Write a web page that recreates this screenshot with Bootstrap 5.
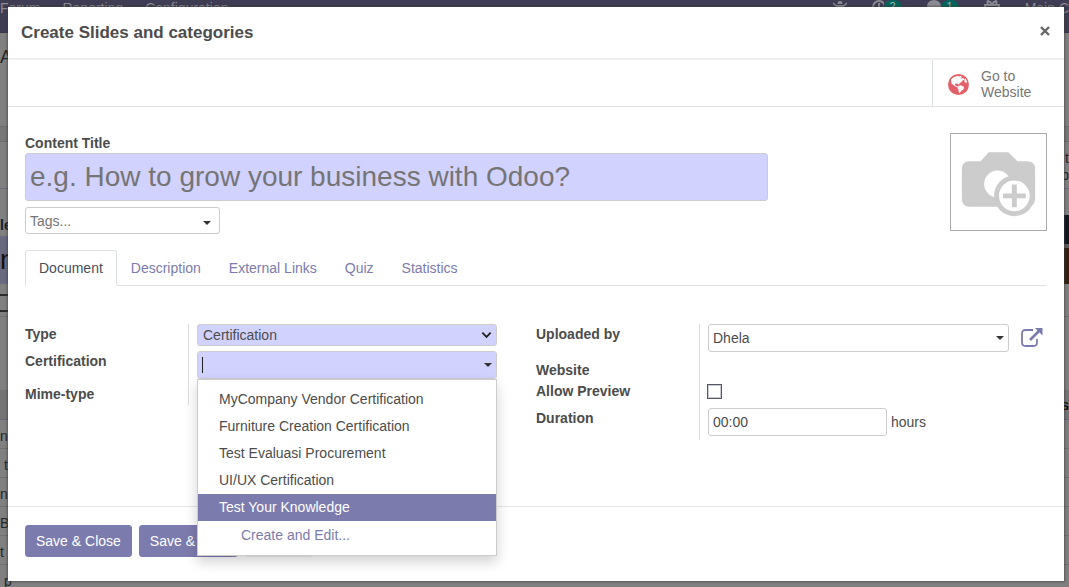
<!DOCTYPE html>
<html lang="en">
<head>
<meta charset="utf-8">
<meta name="viewport" content="width=device-width, initial-scale=1">
<title>Create Slides and categories</title>
<link href="https://cdn.jsdelivr.net/npm/bootstrap@5.3.0/dist/css/bootstrap.min.css" rel="stylesheet">
<style>
  :root { --brand: #7c7bad; --required: #d2d2ff; --ink: #4c4c4c; --rule: #dee2e6; }
  body { font: 14px/21px "Liberation Sans", Arial, sans-serif; color: var(--ink); background: #808080; min-height: 100vh; padding: 7px 5px 6px 8px; position: relative; }

  /* dimmed page behind the dialog */
  .backdrop-page { position: absolute; inset: 0; overflow: hidden; color: #262626; white-space: nowrap; }
  .top-nav { height: 33px; background: #3e3d54; color: #8b8b93; line-height: 16px; border-bottom: 1px solid #38374c; }
  .top-nav .menu-names { gap: 22px; }
  .top-nav .tray { gap: 25px; }
  .tray .pill { background: #00655c; color: #a3b5b3; border-radius: 8px; font-size: 11px; line-height: 12px; width: 18px; text-align: center; }
  .bg-crumb { height: 93px; padding-top: 14px; font-size: 18px; }
  .bg-status { height: 16px; background: #777; border: solid #6c6c6c; border-width: 1px 0; }
  .bg-stats { height: 47px; border-bottom: 1px solid #6d6d78; line-height: 17px; padding-top: 8px; }
  .bg-label { height: 47px; padding-top: 26px; font-weight: bold; color: #1b1b28; }
  .bg-name { height: 48px; background: linear-gradient(90deg, #696980 50%, #808080 50%); font-size: 27px; line-height: 48px; color: #111; }
  .bg-photo { width: 60px; height: 69px; margin-top: -21px; background: linear-gradient(#101820 0 42%, #5c5a58 42% 48%, #33200f 48%); }
  .bg-tags { height: 18px; width: 50%; margin-top: 10px; border: solid #2b2b2b; border-width: 2px 0; }
  .bg-gap { height: 74px; border-top: 1px solid #6f6f6f; margin-top: 4px; }
  .bg-head { height: 30px; background: #747474; border-bottom: 1px solid #686870; font-weight: bold; line-height: 30px; color: #111; }
  .bg-line { height: 29px; line-height: 33px; border-bottom: 1px solid #707070; }

  .dialog { position: relative; background: #fff; box-shadow: 0 0 2px 1px rgba(60,60,60,.6); min-height: calc(100vh - 13px); }
  .dialog-head { height: 53px; padding: 0 14px 0 13px; border-bottom: 2px solid #f0f0f0; }
  .dialog-head h1 { font-size: 17px; font-weight: bold; margin: 0; line-height: 24px; }
  .close-x { border: 0; background: none; padding: 0; line-height: 0; color: #666; margin-bottom: 4px; }
  .button-box { border-bottom: 1px solid var(--rule); height: 47px; }
  .stat-btn { width: 132px; border: 0; border-left: 1px solid var(--rule); background: #fff; color: #777; line-height: 16px; padding: 2px 0 0 15px; gap: 12px; text-align: left; }
  .sheet { padding: 26px 17px 0; }
  .title-block { width: 743px; flex: 0 1 743px; }
  .field-label { font-weight: bold; color: var(--ink); }
  .title-block .field-label { line-height: 20px; }
  .form-control, .form-select { border: 1px solid #ccc; border-radius: 3px; padding: 0 4px; font-size: 14px; line-height: 21px; color: var(--ink); height: 28px; }
  .form-control::placeholder { color: #757575; opacity: 1; }
  .form-control.title-input { height: 48px; font-size: 28px; background: var(--required); }
  .required-field { background-color: var(--required); }
  .form-select.type-select { height: 22px; padding: 0 5px; line-height: 20px; background: var(--required) url("data:image/svg+xml,%3Csvg xmlns='http://www.w3.org/2000/svg' viewBox='0 0 12 8'%3E%3Cpath d='M1.5 1.5 6 6l4.500-4.500' fill='none' stroke='%23222' stroke-width='2'/%3E%3C/svg%3E") no-repeat right 4px center / 11px 8px; }
  .many2one { position: relative; }
  .many2one::after { content: ""; position: absolute; right: 5px; top: 12px; border: 4px solid transparent; border-top-color: #333; border-bottom: 0; }
  .tags-box { width: 195px; margin-top: 6px; }
  .tags-box .form-control { height: 27px; }
  .tags-box::after { top: 14px; right: 9px; }
  .caret-bar { position: absolute; left: 5px; top: 6px; width: 1px; height: 16px; background: #222; }
  .avatar { width: 97px; height: 98px; border: 1px solid #aaa; padding: 0; background: #fff; }

  .nav-tabs { margin-top: 16px; border-color: var(--rule); }
  .nav-tabs .nav-link { padding: 7px 13px 6px; border-radius: 3px 3px 0 0; color: var(--brand); }
  .nav-tabs .nav-link.active { color: #495057; }

  .groups { display: grid; grid-template-columns: 472fr 511fr; gap: 39px; margin-top: 38px; min-height: 181px; align-items: start; }
  .field-grid { display: grid; grid-template-columns: 163px 1fr; }
  .field-grid > .value-cell { border-left: 1px solid #ddd; padding-left: 8px; }
  .rows-left { grid-template-rows: 27px 33px 21px; }
  .rows-right { grid-template-rows: 36px 21px 27px 32px; }
  .duration { width: 179px; }
  .tick { width: 15px; height: 15px; margin: 3px 0 0 -1px; appearance: none; border: 1px solid #555862; box-shadow: inset 0 0 0 1px #c9cbd3; display: block; background: #fff; }

  .suggest { position: absolute; top: 28px; left: 0; right: 0; z-index: 5; background: #fff; border: 1px solid #ccc; padding: 6px 0 5px; margin: 0; list-style: none; box-shadow: 0 6px 12px rgba(0,0,0,.18); }
  .suggest a { display: block; height: 27px; line-height: 27px; padding-left: 21px; color: var(--ink); text-decoration: none; }
  .suggest a.current { background: var(--brand); color: #fff; }
  .suggest a.create { color: var(--brand); padding-left: 43px; height: 29px; line-height: 29px; }

  .dialog-foot { border-top: 1px solid #e4e7ea; padding: 18px 17px 24px; gap: 7px; }
  .dialog-foot .btn { font-size: 14px; line-height: 20px; padding: 5px 10px; border-radius: 3px; height: 32px; }
  .btn-brand, .btn-brand:hover { background: var(--brand); border-color: var(--brand); color: #fff; }
  .btn-plain { background: #fff; border-color: #e9ebee; color: var(--ink); width: 68px; }
</style>
</head>
<body>

<div class="backdrop-page" aria-hidden="true">
  <div class="top-nav d-flex justify-content-between">
    <div class="menu-names d-flex"><span>Forum</span><span>Reporting</span><span>Configuration</span></div>
    <div class="tray d-flex">
      <svg width="14" height="14" viewBox="0 0 14 14" fill="#8b8b93"><path d="M4.500 4q0-3 2.500-3t2.500 3zM3 5h8v6H3z"/><path fill="none" stroke="#8b8b93" stroke-width="1.500" d="m0 3 3 3m11-3-3 3"/></svg>
      <div class="d-flex"><svg width="12" height="14" viewBox="0 0 12 14" fill="none" stroke="#8b8b93" stroke-width="2"><circle cx="7" cy="7" r="6"/><path d="M7 3v4"/></svg><span class="pill">2</span></div>
      <div class="d-flex"><svg width="14" height="14" viewBox="0 0 14 14" fill="#8b8b93"><ellipse cx="7" cy="6" rx="7" ry="6"/></svg><span class="pill">1</span></div>
      <svg width="16" height="14" viewBox="0 0 16 14" fill="none" stroke="#8b8b93" stroke-width="2"><path d="M1 5h14v5H1zM8 5C6 0 2 0 4 4m4 1c2-5 6-5 4-1"/></svg>
      <span>Main C</span>
    </div>
  </div>
  <div class="bg-crumb">A</div>
  <div class="bg-status"></div>
  <div class="bg-stats text-end">t<br>b</div>
  <div class="bg-label">le</div>
  <div class="bg-name d-flex justify-content-between"><span>n</span><div class="bg-photo"></div></div>
  <div class="bg-tags"></div>
  <div class="bg-gap"></div>
  <div class="bg-head text-end">s</div>
  <div class="bg-line">ne</div>
  <div class="bg-line">&nbsp;t</div>
  <div class="bg-line">ne</div>
  <div class="bg-line">B</div>
  <div class="bg-line">t</div>
  <div class="bg-line">&nbsp;p</div>
</div>

<div class="dialog d-flex flex-column" role="dialog" aria-labelledby="dlg-title">
  <header class="dialog-head d-flex align-items-center justify-content-between">
    <h1 id="dlg-title">Create Slides and categories</h1>
    <button type="button" class="close-x" aria-label="Close"><svg width="10" height="10" viewBox="0 0 10 10" stroke="currentColor" stroke-width="2.400"><path d="m1 1 8 8M9 1 1 9"/></svg></button>
  </header>

  <div class="button-box d-flex justify-content-end">
    <button type="button" class="stat-btn d-flex align-items-center">
      <svg width="21" height="21" viewBox="0 0 21 21"><circle cx="10.500" cy="10.500" r="10.500" fill="#e46068"/><path fill="#fff" d="M3 5.500 6 3l4-1.200 1 .8 2-.6 1 1.200-1.500.8 1 .8 1.500-1 1.500 2-2 .7-1 1.500-2 1.300-.5 1.500L9 9.500l-2 .3.300 1.700 1.700.5 1.500 1.500-1.500-.2L6 11.500 3.500 9.500z"/><path fill="#fff" d="m10.500 12 2-.8 3.500 1.600-.5 2.700-2.500 1.500-1.300 2.300-1-1.300-.2-2.500-1-1.500zM16.500 5l1.300-.3 1.200 3-.8 1.500-1.700-1.500z"/></svg>
      <span>Go to<br>Website</span>
    </button>
  </div>

  <main class="sheet flex-grow-1">
    <div class="d-flex justify-content-between">
      <div class="title-block">
        <label class="field-label d-block" for="title">Content Title</label>
        <input id="title" type="text" class="form-control title-input" placeholder="e.g. How to grow your business with Odoo?">
        <div class="many2one tags-box"><input type="text" class="form-control" aria-label="Tags" placeholder="Tags..."></div>
      </div>
      <button type="button" class="avatar" aria-label="Upload image">
        <svg width="95" height="96" viewBox="0 0 96 96"><path fill="#ccc" d="M19 27h11l8-9h20l9 9h10q8 0 8 8v30q0 8-8 8H19q-8 0-8-8V35q0-8 8-8z"/><circle cx="47" cy="50" r="13.500" fill="#fff"/><circle cx="64" cy="62" r="20.500" fill="#ccc"/><circle cx="64" cy="62" r="15.500" fill="#fff"/><path stroke="#ccc" stroke-width="5" d="M64 50.500v23M52.500 62h23"/></svg>
      </button>
    </div>

    <ul class="nav nav-tabs">
      <li class="nav-item"><a class="nav-link active" href="#document">Document</a></li>
      <li class="nav-item"><a class="nav-link" href="#description">Description</a></li>
      <li class="nav-item"><a class="nav-link" href="#links">External Links</a></li>
      <li class="nav-item"><a class="nav-link" href="#quiz">Quiz</a></li>
      <li class="nav-item"><a class="nav-link" href="#statistics">Statistics</a></li>
    </ul>

    <div class="groups" id="document">
      <div class="field-grid rows-left">
        <label class="field-label" for="type">Type</label>
        <div class="value-cell"><select id="type" class="form-select type-select"><option>Certification</option></select></div>
        <label class="field-label" for="cert">Certification</label>
        <div class="value-cell">
          <div class="many2one">
            <input id="cert" type="text" class="form-control required-field" autocomplete="off">
            <span class="caret-bar"></span>
            <ul class="suggest">
              <li><a href="#">MyCompany Vendor Certification</a></li>
              <li><a href="#">Furniture Creation Certification</a></li>
              <li><a href="#">Test Evaluasi Procurement</a></li>
              <li><a href="#">UI/UX Certification</a></li>
              <li><a href="#" class="current">Test Your Knowledge</a></li>
              <li><a href="#" class="create">Create and Edit...</a></li>
            </ul>
          </div>
        </div>
        <span class="field-label">Mime-type</span>
        <div class="value-cell"></div>
      </div>

      <div class="field-grid rows-right">
        <label class="field-label" for="user">Uploaded by</label>
        <div class="value-cell d-flex align-items-start">
          <div class="many2one flex-grow-1"><input id="user" type="text" class="form-control" value="Dhela"></div>
          <a href="#" class="d-flex ms-2 ps-1 pe-1 pt-1" aria-label="Open record"><svg width="22" height="19" viewBox="0 0 22 19" fill="none" stroke="#7c7bad"><path stroke-width="1.800" d="M12 2H4.500Q1 2 1 5.500v9Q1 18 4.500 18h8q3.500 0 3.500-3.500V11"/><path stroke-width="2.600" d="m9 12 9-9"/><path fill="#7c7bad" stroke="none" d="M14 0h7.500v7.500z"/></svg></a>
        </div>
        <span class="field-label">Website</span>
        <div class="value-cell"></div>
        <label class="field-label" for="preview">Allow Preview</label>
        <div class="value-cell"><input id="preview" type="checkbox" class="tick"></div>
        <label class="field-label" for="duration">Duration</label>
        <div class="value-cell d-flex align-items-start">
          <input id="duration" type="text" class="form-control duration" value="00:00">
          <span class="ms-1 pt-1">hours</span>
        </div>
      </div>
    </div>
  </main>

  <footer class="dialog-foot d-flex">
    <button type="button" class="btn btn-brand">Save &amp; Close</button>
    <button type="button" class="btn btn-brand">Save &amp; New</button>
    <button type="button" class="btn btn-plain" aria-label="Discard"></button>
  </footer>
</div>

<script src="https://cdn.jsdelivr.net/npm/bootstrap@5.3.0/dist/js/bootstrap.bundle.min.js"></script>
</body>
</html>
